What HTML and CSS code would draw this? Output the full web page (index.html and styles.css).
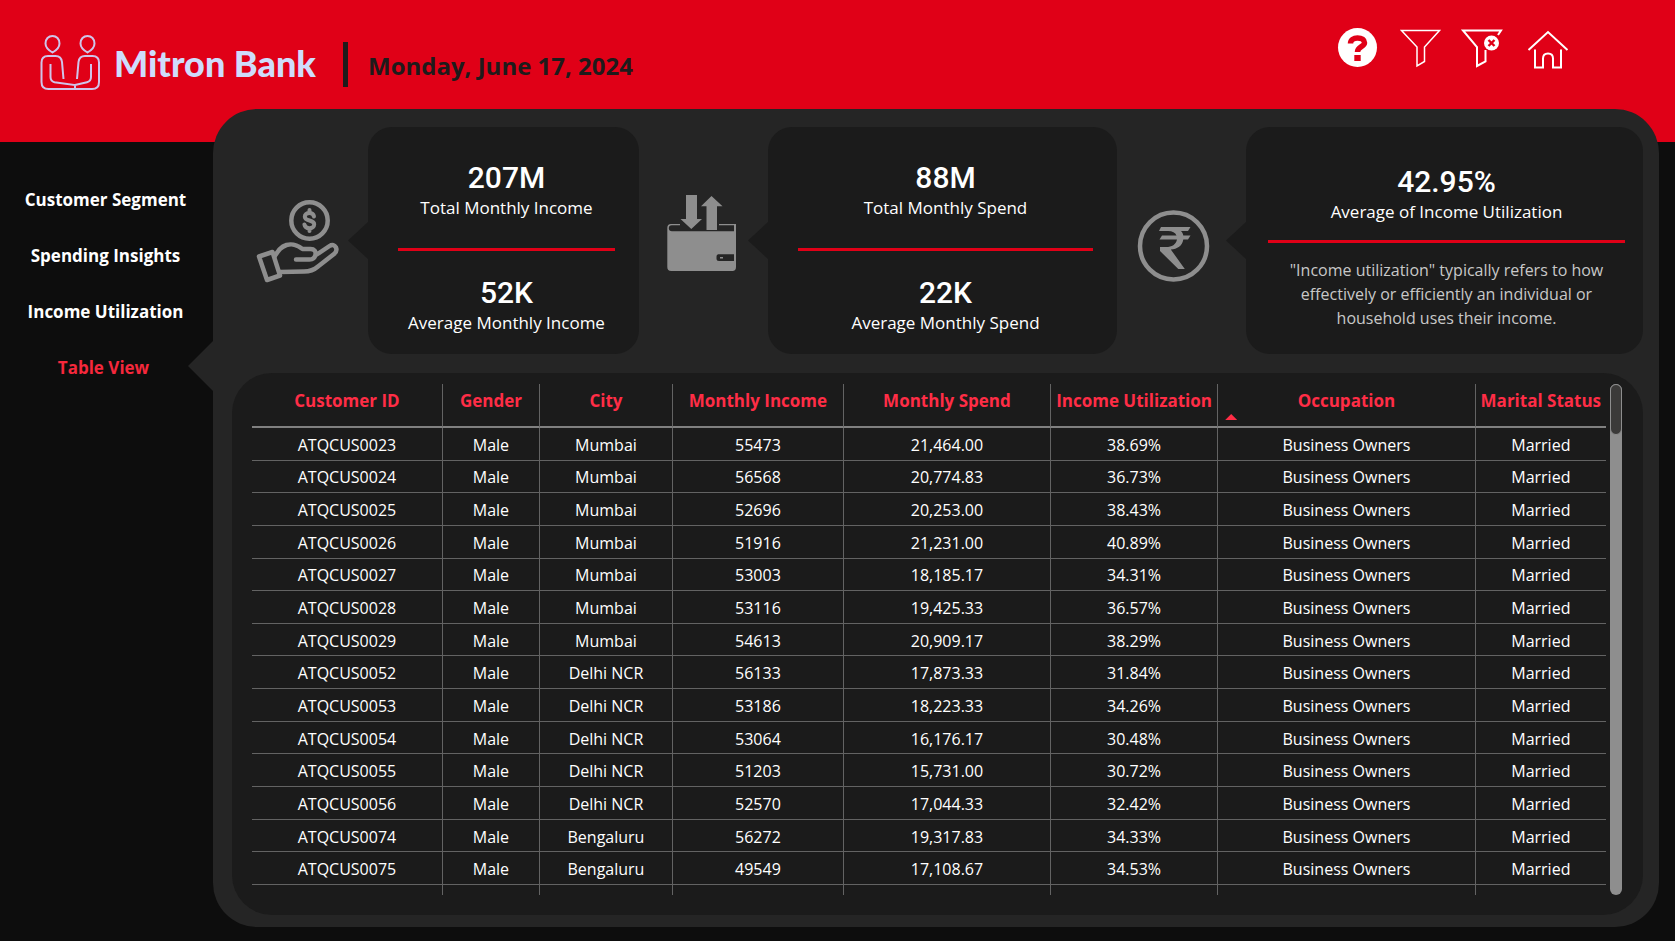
FILE: index.html
```html
<!DOCTYPE html>
<html lang="en">
<head>
<meta charset="utf-8">
<title>Mitron Bank – Table View</title>
<link rel="stylesheet" href="styles.css">
</head>
<body>
<header class="topbar">
  <div class="brand">
    <svg class="brand-mark" viewBox="40 34 60 57" aria-hidden="true">
      <path d="M52.500 36c4 0 7 3 7 7.500 0 4-3.500 7-7 9-3.500-2-7-5-7-9 0-4.500 3-7.500 7-7.500zM87.500 36c4 0 7 3 7 7.500 0 4-3.500 7-7 9-3.500-2-7-5-7-9 0-4.500 3-7.500 7-7.500z"/>
      <path d="M63.500 79 62 62c-.5-4-2.500-6-6.500-6H48c-4 0-6.500 2.500-6.500 6.500V82c0 4.500 2.500 7 7 7h43.500c4.500 0 7-2.500 7-7V62.500c0-4-2.500-6.500-6.500-6.500H85c-4 0-6 2-6.500 6L77 79"/>
      <path d="M50.500 64v13c0 3 1 4.500 4 5.200L75 85v4M75 85l12-2.800c3-.7 4-2.200 4-5.200V64"/>
    </svg>
    <span class="brand-name">Mitron Bank</span>
    <span class="brand-rule"></span>
    <time class="today" datetime="2024-06-17">Monday, June 17, 2024</time>
  </div>
  <div class="actions">
    <button type="button" class="action action-help" aria-label="Help">
      <svg viewBox="0 0 40 40"><circle cx="19.500" cy="19.500" r="19.500" fill="#fff"/><path d="M12.500 15.500c0-3.500 3-5.500 7-5.500 4.500 0 7 2 7 4.800 0 4.200-7 3.700-7 9.200" fill="none" stroke="#e00017" stroke-width="5.500"/><path d="M16.300 27h6.400v6h-6.400z" fill="#e00017"/></svg>
    </button>
    <button type="button" class="action" aria-label="Filter">
      <svg viewBox="0 0 40 40"><path class="line" d="M1.500 2.500h38L24.500 19v14.500L17 38V19z"/></svg>
    </button>
    <button type="button" class="action" aria-label="Clear filters">
      <svg viewBox="0 0 40 40"><path class="line heavy" d="M36 7 39 2.500H1L15 19v19l8.500-4.500V22"/><circle cx="29.500" cy="15" r="7.500" fill="#fff"/><path d="m26.500 12 6 6m0-6-6 6" stroke="#e00017" stroke-width="2.400"/></svg>
    </button>
    <button type="button" class="action action-home" aria-label="Home">
      <svg viewBox="0 0 40 40"><path class="line heavy" d="M.5 22 20 4l19.500 18M7 21.500v18h8v-9c0-3 2-5 5-5s5 2 5 5v9h8v-18"/></svg>
    </button>
  </div>
</header>

<main class="layout">
  <nav class="sidebar">
    <a href="#customer-segment" class="nav-link">Customer Segment</a>
    <a href="#spending-insights" class="nav-link">Spending Insights</a>
    <a href="#income-utilization" class="nav-link">Income Utilization</a>
    <a href="#table-view" class="nav-link active" aria-current="page">Table View</a>
  </nav>

  <div class="panel">
    <section class="kpis">
      <svg class="kpi-icon" viewBox="254 195 92 92" aria-hidden="true">
        <g fill="none" stroke="#8e8e8e" stroke-width="4.500" stroke-linecap="round" stroke-linejoin="round">
          <circle cx="309.500" cy="220.500" r="18.200"/>
          <path stroke-width="4" d="M314 216.500c-.5-2.500-2.300-3.500-4.700-3.500-2.700 0-4.500 1.500-4.500 3.700 0 5 9.400 2.600 9.400 7.600 0 2.300-1.900 3.900-4.900 3.900-2.600 0-4.500-1.300-4.900-3.800M309.500 210v3m0 15.500v2.500"/>
          <path d="m259 256.500 13.500-4.500 7.500 23.500-13 4.500z"/>
          <path d="M274.500 256.500c4-6 6-9.500 12-11.500 6-1.500 10-.5 16 4h8c4 0 5.500 2.500 5 5.500-.5 3-2.500 5-6 5h-13.500M316 255l13.500-9c3-2 5-1 6.500 1.500 1 2.500.5 4.500-2 6.500l-16 12.500c-4 3.500-8 5-14 5l-24 .5"/>
        </g>
      </svg>
      <article class="card">
        <div class="metric"><strong>207M</strong><span>Total Monthly Income</span></div>
        <hr>
        <div class="metric"><strong>52K</strong><span>Average Monthly Income</span></div>
      </article>

      <svg class="kpi-icon" viewBox="658 195 92 92" aria-hidden="true">
        <g fill="#8e8e8e">
          <path d="M686 195h11v24h5l-10.700 10L680.500 219h5.500zM711.500 196l11 10.300H717V230h-10.500v-23.700H701z"/>
          <path fill-rule="evenodd" d="M680 224h-9c-2.500 0-3.700 1.500-3.700 4v39c0 2.700 1.300 4 4 4h61c2.500 0 3.700-1.500 3.700-4v-43h-17v1.200h15v6h-62c-2 0-3.200-1-3.200-3s1-3 3-3h8.200zM734 254.300v6.700h-15c-1.700 0-2.500-.8-2.500-2.500v-1.700c0-1.700.8-2.500 2.500-2.500z"/>
          <path d="M720 257h3v1.500h-3z"/>
        </g>
      </svg>
      <article class="card">
        <div class="metric"><strong>88M</strong><span>Total Monthly Spend</span></div>
        <hr>
        <div class="metric"><strong>22K</strong><span>Average Monthly Spend</span></div>
      </article>

      <svg class="kpi-icon" viewBox="1136 195 92 92" aria-hidden="true">
        <circle cx="1173.500" cy="246" r="33.500" fill="none" stroke="#8e8e8e" stroke-width="4.500"/>
        <path fill="#8e8e8e" d="m1161 227h29.500l-2.500 4h-7c1.200 1.300 2 2.700 2.300 4.500h7.200l-2.500 4h-4.700c-1 6.500-6 9.500-12.500 10l14 19.500h-6.500L1160 251v-4h6c6 0 10-2.500 11-7.500h-17.500l2.500-4h14.500c-1.200-3-4-4.500-8.500-4.500h-9z"/>
      </svg>
      <article class="card card-note">
        <div class="metric"><strong>42.95%</strong><span>Average of Income Utilization</span></div>
        <hr>
        <p>"Income utilization" typically refers to how effectively or efficiently an individual or household uses their income.</p>
      </article>
    </section>

    <section class="table-card">
      <table>
        <colgroup><col class="c-id"><col class="c-gender"><col class="c-city"><col class="c-income"><col class="c-spend"><col class="c-util"><col class="c-occ"><col class="c-status"></colgroup>
        <thead>
          <tr><th>Customer ID</th><th>Gender</th><th>City</th><th>Monthly Income</th><th>Monthly Spend</th><th>Income Utilization</th><th class="sorted" aria-sort="ascending">Occupation</th><th>Marital Status</th></tr>
        </thead>
        <tbody>
          <tr><td>ATQCUS0023</td><td>Male</td><td>Mumbai</td><td>55473</td><td>21,464.00</td><td>38.69%</td><td>Business Owners</td><td>Married</td></tr>
          <tr><td>ATQCUS0024</td><td>Male</td><td>Mumbai</td><td>56568</td><td>20,774.83</td><td>36.73%</td><td>Business Owners</td><td>Married</td></tr>
          <tr><td>ATQCUS0025</td><td>Male</td><td>Mumbai</td><td>52696</td><td>20,253.00</td><td>38.43%</td><td>Business Owners</td><td>Married</td></tr>
          <tr><td>ATQCUS0026</td><td>Male</td><td>Mumbai</td><td>51916</td><td>21,231.00</td><td>40.89%</td><td>Business Owners</td><td>Married</td></tr>
          <tr><td>ATQCUS0027</td><td>Male</td><td>Mumbai</td><td>53003</td><td>18,185.17</td><td>34.31%</td><td>Business Owners</td><td>Married</td></tr>
          <tr><td>ATQCUS0028</td><td>Male</td><td>Mumbai</td><td>53116</td><td>19,425.33</td><td>36.57%</td><td>Business Owners</td><td>Married</td></tr>
          <tr><td>ATQCUS0029</td><td>Male</td><td>Mumbai</td><td>54613</td><td>20,909.17</td><td>38.29%</td><td>Business Owners</td><td>Married</td></tr>
          <tr><td>ATQCUS0052</td><td>Male</td><td>Delhi NCR</td><td>56133</td><td>17,873.33</td><td>31.84%</td><td>Business Owners</td><td>Married</td></tr>
          <tr><td>ATQCUS0053</td><td>Male</td><td>Delhi NCR</td><td>53186</td><td>18,223.33</td><td>34.26%</td><td>Business Owners</td><td>Married</td></tr>
          <tr><td>ATQCUS0054</td><td>Male</td><td>Delhi NCR</td><td>53064</td><td>16,176.17</td><td>30.48%</td><td>Business Owners</td><td>Married</td></tr>
          <tr><td>ATQCUS0055</td><td>Male</td><td>Delhi NCR</td><td>51203</td><td>15,731.00</td><td>30.72%</td><td>Business Owners</td><td>Married</td></tr>
          <tr><td>ATQCUS0056</td><td>Male</td><td>Delhi NCR</td><td>52570</td><td>17,044.33</td><td>32.42%</td><td>Business Owners</td><td>Married</td></tr>
          <tr><td>ATQCUS0074</td><td>Male</td><td>Bengaluru</td><td>56272</td><td>19,317.83</td><td>34.33%</td><td>Business Owners</td><td>Married</td></tr>
          <tr><td>ATQCUS0075</td><td>Male</td><td>Bengaluru</td><td>49549</td><td>17,108.67</td><td>34.53%</td><td>Business Owners</td><td>Married</td></tr>
          <tr class="tail"><td></td><td></td><td></td><td></td><td></td><td></td><td></td><td></td></tr>
        </tbody>
      </table>
      <div class="scroll-track"><div class="scroll-thumb"></div></div>
    </section>
  </div>
</main>
</body>
</html>
```
FILE: styles.css
```css
* { box-sizing: border-box; }

body {
  margin: 0;
  min-height: 100vh;
  display: flex;
  flex-direction: column;
  background: #0d0d0d;
  color: #fff;
  font-family: "Open Sans", "Noto Sans", sans-serif;
  font-size: 16px;
}

.topbar {
  height: 142px;
  flex: none;
  display: flex;
  justify-content: space-between;
  align-items: flex-start;
  padding: 28px 107px 0 40px;
  background: #e00017;
}

.brand {
  display: flex;
  align-items: center;
  padding-top: 6px;
}
.brand-mark {
  width: 60px;
  height: 57px;
  fill: none;
  stroke: #cfc4ea;
  stroke-width: 2;
}
.brand-name {
  margin-left: 14px;
  width: 209px;
  color: #cfdcfb;
  font-family: Lato, sans-serif;
  font-size: 36px;
  font-weight: 900;
  line-height: 44px;
  white-space: nowrap;
}
.brand-rule {
  width: 5px;
  height: 45px;
  margin: 3px 20px 0;
  background: #1e1b1b;
}
.today {
  padding-top: 6px;
  color: #1e1b1b;
  font-size: 24px;
  font-weight: 700;
  line-height: 32px;
  white-space: nowrap;
}

.actions { display: flex; gap: 22px; }
.action {
  width: 40px;
  height: 40px;
  padding: 0;
  border: 0;
  background: none;
  cursor: pointer;
}
.action-home { margin-left: 4px; }
.action svg {
  display: block;
  width: 40px;
  height: 40px;
  overflow: visible;
}
.action .line {
  fill: none;
  stroke: #fff;
  stroke-width: 1.5;
}
.action .heavy { stroke-width: 2; }

.layout {
  flex: 1;
  display: grid;
  grid-template-columns: 213px minmax(0, 1fr);
  margin-top: -33px;
  padding: 0 16px 14px 0;
}

.sidebar {
  display: flex;
  flex-direction: column;
  padding-top: 62px;
}
.nav-link {
  position: relative;
  height: 56px;
  display: flex;
  align-items: center;
  justify-content: center;
  padding-right: 2px;
  color: #fff;
  font-size: 17px;
  font-weight: 700;
  text-decoration: none;
}
.nav-link.active {
  padding-right: 6px;
  color: #f5283c;
}
.nav-link.active::after {
  content: "";
  position: absolute;
  right: 0;
  top: 2px;
  width: 25px;
  height: 50px;
  background: #252525;
  clip-path: polygon(100% 0, 0 50%, 100% 100%);
}

.panel {
  display: flex;
  flex-direction: column;
  gap: 19px;
  padding: 18px 16px 12px 19px;
  border-radius: 44px;
  background: #252525;
}

.kpis {
  display: grid;
  grid-template-columns: 136px 271fr 129px 349fr 129px 397fr;
  align-items: center;
}
.kpi-icon {
  width: 92px;
  height: 92px;
  justify-self: center;
}
.card {
  position: relative;
  align-self: stretch;
  padding: 33px 24px 19px 30px;
  border-radius: 24px;
  background: #1b1b1b;
  text-align: center;
}
.card::before {
  content: "";
  position: absolute;
  left: -20px;
  top: 95px;
  width: 20px;
  height: 37px;
  background: #1b1b1b;
  clip-path: polygon(100% 0, 0 50%, 100% 100%);
}
.metric {
  display: flex;
  flex-direction: column;
}
.metric strong {
  font-family: Roboto, sans-serif;
  font-size: 30px;
  font-weight: 500;
  line-height: 36px;
}
.metric span {
  font-size: 17px;
  line-height: 24px;
  white-space: nowrap;
}
.card hr {
  height: 3px;
  margin: 28px 0 24px;
  border: 0;
  background: #e00017;
}
.card-note { padding: 37px 18px 19px 22px; }
.card-note hr { margin: 16px 0 15px; }
.card-note p {
  margin: 0;
  padding: 0 12px;
  color: #c8c8c8;
  font-size: 16px;
  line-height: 24px;
}

.table-card {
  flex: 1;
  display: flex;
  gap: 4px;
  padding: 11px 21px 20px 20px;
  border-radius: 40px;
  background: #1b1b1b;
}
table {
  flex: 1;
  table-layout: fixed;
  border-collapse: separate;
  border-spacing: 0;
  text-align: center;
}
.c-id { width: 14.1%; }
.c-gender { width: 7.17%; }
.c-city { width: 9.82%; }
.c-income { width: 12.63%; }
.c-spend { width: 15.29%; }
.c-util { width: 12.35%; }
.c-occ { width: 19.02%; }
.c-status { width: 9.62%; }

th, td {
  padding: 0;
  border-right: 1px solid #636363;
  white-space: nowrap;
}
th:last-child, td:last-child { border-right: 0; }
th {
  position: relative;
  height: 44px;
  padding-top: 5px;
  border-bottom: 2px solid #808080;
  color: #ff2d46;
  font-size: 17px;
  font-weight: 700;
  line-height: 24px;
  vertical-align: top;
}
td {
  padding-top: 2px;
  border-bottom: 1px solid #636363;
  font-size: 16px;
  line-height: 24px;
}
.tail td {
  height: 10px;
  border-bottom: 0;
}
.sorted::after {
  content: "";
  position: absolute;
  left: 7px;
  bottom: 6px;
  width: 12px;
  height: 6px;
  background: #ff2d46;
  clip-path: polygon(50% 0, 100% 100%, 0 100%);
}

.scroll-track {
  width: 12px;
  border-radius: 6px;
  background: #8e8e8e;
}
.scroll-thumb {
  height: 51px;
  border: 1px solid #8e8e8e;
  border-radius: 6px;
  background: #3b3a39;
}
```
